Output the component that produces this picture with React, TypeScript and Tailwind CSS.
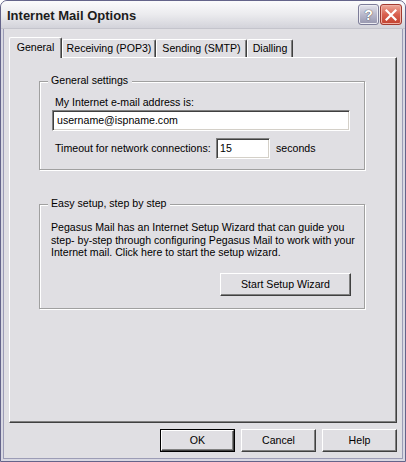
import React from "react";

const font = "font-['Liberation_Sans',Arial,sans-serif]";

// classic 3D bevels
const raised = `border border-t-white border-l-white border-r-[#404040] border-b-[#404040]
  shadow-[inset_-1px_-1px_0_#808080]`;
const sunken = `border border-t-[#808080] border-l-[#808080] border-r-white border-b-white
  shadow-[inset_1px_1px_0_#404040,inset_-1px_-1px_0_#d4d0c8]`;
const groupBox = `flex flex-col border border-[#a0a0a0]
  shadow-[inset_1px_1px_0_#fff,1px_1px_0_#fff]`;
const legend = `self-start -mt-[8px] ml-[8px] pl-[3px] pr-[4px] bg-[#e0dfe3] leading-[13px]`;

function Btn({ label, primary, w = "w-[75px]" }: { label: string; primary?: boolean; w?: string }) {
  if (primary) {
    return (
      <div className={`${w} h-[23px] border border-black flex`}>
        <div className={`flex-1 flex items-center justify-center ${raised}`}>{label}</div>
      </div>
    );
  }
  return <div className={`${w} h-[23px] flex items-center justify-center ${raised}`}>{label}</div>;
}

function TitleBar() {
  return (
    <div className="h-[28px] shrink-0 flex items-center justify-between pl-[6px] pr-[3px] bg-gradient-to-b from-[#fbfbfc] via-[#ebebee] to-[#d3d3da] border-b border-[#c4c4cc]">
      <span className="pt-[2px] text-[13px] font-bold text-[#1c1c1c]">Internet Mail Options</span>
      <div className="flex gap-[1px] items-center">
        <div className="w-[21px] h-[21px] rounded-[3px] border border-[#7d7d99] bg-gradient-to-b from-[#e4e4ec] via-[#b9b9cc] to-[#9696ae] shadow-[inset_0_0_0_1px_#ececf2] flex items-center justify-center">
          <span className="text-white font-bold text-[14px] leading-none [text-shadow:0_0_1px_#555,0_0_1px_#555]">?</span>
        </div>
        <div className="w-[22px] h-[21px] rounded-[3px] border border-[#a23a30] bg-gradient-to-b from-[#eca89b] via-[#d9604f] to-[#c2412f] shadow-[inset_0_0_0_1px_#f0b2a6] flex items-center justify-center">
          <svg width="12" height="12" viewBox="0 0 12 12">
            <path d="M1.5 1.5 L10.5 10.5 M10.5 1.5 L1.5 10.5" stroke="#fff" strokeWidth="2.2" strokeLinecap="square" />
          </svg>
        </div>
      </div>
    </div>
  );
}

const tabs = [
  { label: "General", w: "w-[53px]", active: true },
  { label: "Receiving (POP3)", w: "w-[94px]" },
  { label: "Sending (SMTP)", w: "w-[91px]" },
  { label: "Dialling", w: "w-[46px]" },
];

function Tabs() {
  return (
    <div className="flex items-end h-[20px]">
      {tabs.map((t) =>
        t.active ? (
          <div
            key={t.label}
            className={`${t.w} h-[21px] -mb-[1px] relative z-10 bg-[#e0dfe3] border-t border-l border-r border-t-white border-l-white border-r-[#404040] shadow-[inset_-1px_0_0_#808080] rounded-t-[2px] flex justify-center pt-[3px]`}
          >
            {t.label}
          </div>
        ) : (
          <div
            key={t.label}
            className={`${t.w} h-[18px] border-t border-l border-r border-t-white border-l-white border-r-[#404040] shadow-[inset_-1px_0_0_#808080] rounded-t-[2px] flex justify-center pt-[2px]`}
          >
            {t.label}
          </div>
        )
      )}
    </div>
  );
}

function Panel() {
  return (
    <div className={`h-[366px] flex flex-col pl-[29px] pt-[23px] ${raised}`}>
      <div className={`w-[326px] h-[89px] ${groupBox}`}>
        <span className={legend}>General settings</span>
        <span className="mt-[9px] ml-[15px]">My Internet e-mail address is:</span>
        <div className={`mt-[1px] ml-[12px] w-[298px] h-[21px] bg-white flex items-center pl-[4px] ${sunken}`}>
          username@ispname.com
        </div>
        <div className="mt-[7px] ml-[15px] flex items-center h-[21px]">
          <span className="w-[157px] shrink-0 whitespace-nowrap">Timeout for network connections:</span>
          <div className={`ml-[4px] w-[54px] h-[21px] bg-white flex items-center pl-[3px] ${sunken}`}>15</div>
          <span className="ml-[6px]">seconds</span>
        </div>
      </div>

      <div className={`mt-[34px] w-[326px] h-[105px] ${groupBox}`}>
        <span className={legend}>Easy setup, step by step</span>
        <p className="mt-[11px] ml-[11px] leading-[12.5px] whitespace-nowrap">
          Pegasus Mail has an Internet Setup Wizard that can guide you
          <br />
          step- by-step through configuring Pegasus Mail to work with your
          <br />
          Internet mail. Click here to start the setup wizard.
        </p>
        <div className="self-end mt-[14px] mr-[13px]">
          <Btn label="Start Setup Wizard" w="w-[131px]" />
        </div>
      </div>
    </div>
  );
}

export default function App() {
  return (
    <div
      className={`w-[406px] h-[462px] flex flex-col bg-[#e0dfe3] border border-[#64648a] rounded-t-[7px] overflow-hidden
        shadow-[inset_0_0_0_2px_#d8d8e2,inset_0_0_0_3px_#9c9cb6] ${font} text-[10.6px] leading-[13px] text-black`}
    >
      <TitleBar />
      <div className="flex-1 flex flex-col px-[8px] pt-[8px]">
        <Tabs />
        <Panel />
        <div className="flex justify-end gap-[6px] mt-[6px]">
          <Btn label="OK" primary />
          <Btn label="Cancel" />
          <Btn label="Help" />
        </div>
      </div>
    </div>
  );
}
